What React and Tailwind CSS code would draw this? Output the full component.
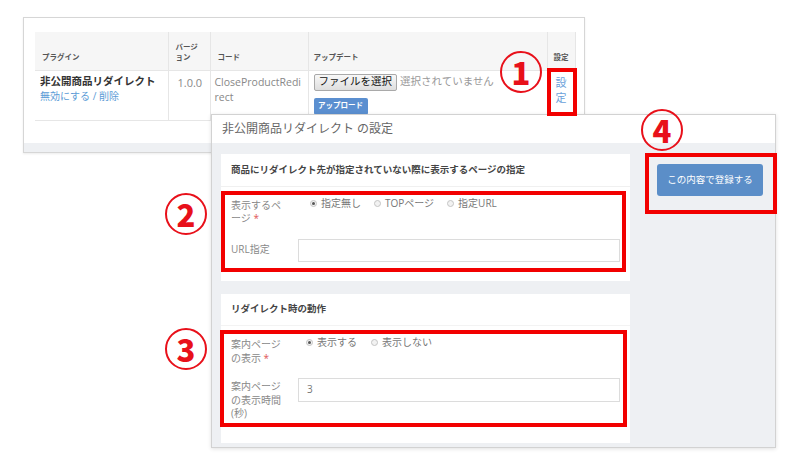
import React from "react";

function Radio({ checked, label }) {
  return (
    <span className="flex items-center gap-[4px] h-[13px]">
      <span className="w-[7px] h-[7px] rounded-full border border-[#c4c4c4] bg-[#f2f2f2] flex items-center justify-center">
        {checked && <span className="w-[3px] h-[3px] rounded-full bg-[#555]" />}
      </span>
      <span>{label}</span>
    </span>
  );
}

function Num({ n, className }) {
  return (
    <div
      className={
        "absolute w-[42px] h-[42px] rounded-full border-2 border-[#e8101a] flex items-center justify-center text-[#e8101a] text-[31px] font-black leading-none font-['Noto_Sans_CJK_JP',sans-serif] " +
        className
      }
    >
      <span className="-mt-[2px]">{n}</span>
    </div>
  );
}

function RedBox({ className }) {
  return <div className={"absolute border-[4px] border-[#f20000] " + className} />;
}

export default function App() {
  return (
    <div className="relative w-[798px] h-[456px] bg-white overflow-hidden font-['Open_Sans','Noto_Sans_CJK_JP',sans-serif]">
      {/* Plugin list card */}
      <div className="pt-[17px] pl-[23px]">
        <div className="w-[562px] h-[136px] border border-[#d6d6d6] bg-white flex flex-col shadow-[0_1px_2px_rgba(0,0,0,0.08)]">
          <div className="pl-[11px] pt-[14px]">
            <table className="border-collapse table-fixed w-[540px]">
              <colgroup>
                <col className="w-[133px]" />
                <col className="w-[42px]" />
                <col className="w-[98px]" />
                <col className="w-[239px]" />
                <col className="w-[28px]" />
              </colgroup>
              <thead>
                <tr className="bg-[#f6f6f6] h-[38px] text-[7.5px] font-bold text-[#555] leading-[10px]">
                  <th className="text-left align-bottom pb-[8px] pl-[7px] border-b border-[#e6e6e6]">プラグイン</th>
                  <th className="text-left align-bottom pb-[8px] pl-[7px] border-l border-b border-[#e6e6e6]">
                    バージ
                    <br />
                    ョン
                  </th>
                  <th className="text-left align-bottom pb-[8px] pl-[7px] border-l border-b border-[#e6e6e6]">コード</th>
                  <th className="text-left align-bottom pb-[8px] pl-[5px] border-l border-b border-[#e6e6e6]">アップデート</th>
                  <th className="text-center align-bottom pb-[8px] border-l border-r border-b border-[#e6e6e6]">設定</th>
                </tr>
              </thead>
              <tbody>
                <tr className="h-[50px] align-top border-b border-[#e6e6e6]">
                  <td className="pl-[5px] pt-[3px] leading-[15px] whitespace-nowrap">
                    <div className="text-[10.5px] font-bold text-[#333]">非公開商品リダイレクト</div>
                    <div className="text-[10px] text-[#5b9bd6]">無効にする / 削除</div>
                  </td>
                  <td className="pl-[9px] pt-[4px] leading-[15px] text-[11px] text-[#888] border-l border-[#e6e6e6]">1.0.0</td>
                  <td className="pl-[4px] pt-[4px] leading-[15px] text-[10.5px] text-[#888] border-l border-[#e6e6e6]">
                    CloseProductRedi
                    <br />
                    rect
                  </td>
                  <td className="pl-[5px] pt-[3px] border-l border-[#e6e6e6]">
                    <div className="flex items-center gap-[3px]">
                      <span className="h-[17px] px-[4px] flex items-center border border-[#a9a9a9] rounded-[2px] bg-gradient-to-b from-[#f8f8f8] to-[#dedede] text-[10.5px] text-[#111]">
                        ファイルを選択
                      </span>
                      <span className="text-[10.5px] text-[#999]">選択されていません</span>
                    </div>
                    <div className="mt-[7px] w-[54px] h-[17px] bg-[#5b8fd0] rounded-[2px] flex items-center justify-center text-[7.5px] font-bold text-white">
                      アップロード
                    </div>
                  </td>
                  <td className="text-center pt-[4px] leading-[15px] text-[11px] text-[#6aa1da] border-l border-r border-[#e6e6e6]">
                    設
                    <br />
                    定
                  </td>
                </tr>
              </tbody>
            </table>
          </div>
          <div className="flex-1" />
          <div className="h-[9px] bg-[#eef0f3]" />
        </div>
      </div>

      {/* Settings dialog */}
      <div className="absolute left-[211px] top-[114px] w-[565px] h-[334px] border border-[#d2d2d2] bg-[#eef0f3] flex flex-col shadow-[0_1px_4px_rgba(0,0,0,0.12)]">
        <div className="h-[28px] bg-white flex items-center pl-[10px] text-[12px] text-[#666]">
          非公開商品リダイレクト の設定
        </div>
        <div className="flex pl-[9px] pt-[11px] gap-[27px]">
          <div className="w-[409px] flex flex-col gap-[13px]">
            {/* Card 1 */}
            <div className="h-[127px] bg-white flex flex-col">
              <div className="h-[33px] flex items-center pl-[10px] border-b border-[#f0f0f0] text-[9.5px] font-bold text-[#444]">
                商品にリダイレクト先が指定されていない際に表示するページの指定
              </div>
              <div className="flex items-start pl-[10px] pt-[12px] text-[10px] leading-[13px] text-[#888]">
                <div className="w-[67px]">
                  表示するペ
                  <br />
                  ージ <span className="text-[#e05555]">*</span>
                </div>
                <div className="flex items-start gap-[13px] pl-[12px] -mt-[2px] text-[#777]">
                  <Radio checked label="指定無し" />
                  <Radio label="TOPページ" />
                  <Radio label="指定URL" />
                </div>
              </div>
              <div className="flex items-start pl-[10px] mt-[14px] text-[10px] leading-[13px] text-[#888]">
                <div className="w-[67px] pt-[4px]">URL指定</div>
                <div className="w-[322px] h-[23px] border border-[#dcdcdc] bg-white" />
              </div>
            </div>
            {/* Card 2 */}
            <div className="h-[149px] bg-white flex flex-col">
              <div className="h-[32px] flex items-center pl-[10px] border-b border-[#f3f3f3] text-[9.5px] font-bold text-[#444]">
                リダイレクト時の動作
              </div>
              <div className="flex items-start pl-[10px] pt-[12px] text-[10px] leading-[13.5px] text-[#888]">
                <div className="w-[67px]">
                  案内ページ
                  <br />
                  の表示 <span className="text-[#e05555]">*</span>
                </div>
                <div className="flex items-start gap-[14px] pl-[8px] -mt-[2px] text-[#777]">
                  <Radio checked label="表示する" />
                  <Radio label="表示しない" />
                </div>
              </div>
              <div className="flex items-start pl-[10px] mt-[13px] text-[10px] leading-[13.5px] text-[#888]">
                <div className="w-[67px] pt-[2px]">
                  案内ページ
                  <br />
                  の表示時間
                  <br />
                  (秒)
                </div>
                <div className="w-[322px] h-[24px] border border-[#dcdcdc] bg-white flex items-center pl-[8px] text-[10px] text-[#777]">
                  3
                </div>
              </div>
            </div>
          </div>
          <div className="pt-[10px]">
            <div className="w-[106px] h-[32px] bg-[#5b8ec8] rounded-[3px] flex items-center justify-center text-[9.5px] text-white">
              この内容で登録する
            </div>
          </div>
        </div>
      </div>

      {/* Annotations */}
      <RedBox className="left-[547px] top-[68px] w-[30px] h-[48px]" />
      <RedBox className="left-[221px] top-[191px] w-[405px] h-[81px]" />
      <RedBox className="left-[220px] top-[330px] w-[407px] h-[97px]" />
      <RedBox className="left-[645px] top-[153px] w-[132px] h-[61px]" />
      <Num n="1" className="left-[500px] top-[51px]" />
      <Num n="2" className="left-[165px] top-[193px]" />
      <Num n="3" className="left-[165px] top-[328px]" />
      <Num n="4" className="left-[641px] top-[109px]" />
    </div>
  );
}
